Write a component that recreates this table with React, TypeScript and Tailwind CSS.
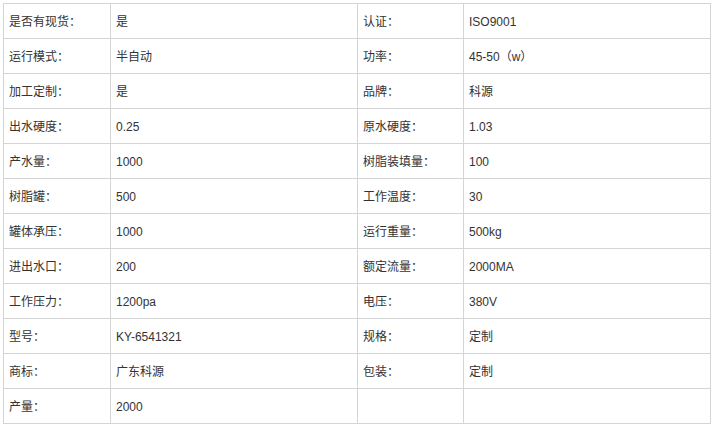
const ROWS: [string, string, string, string][] = [
  ["是否有现货：", "是", "认证：", "ISO9001"],
  ["运行模式：", "半自动", "功率：", "45-50（w）"],
  ["加工定制：", "是", "品牌：", "科源"],
  ["出水硬度：", "0.25", "原水硬度：", "1.03"],
  ["产水量：", "1000", "树脂装填量：", "100"],
  ["树脂罐：", "500", "工作温度：", "30"],
  ["罐体承压：", "1000", "运行重量：", "500kg"],
  ["进出水口：", "200", "额定流量：", "2000MA"],
  ["工作压力：", "1200pa", "电压：", "380V"],
  ["型号：", "KY-6541321", "规格：", "定制"],
  ["商标：", "广东科源", "包装：", "定制"],
  ["产量：", "2000", "", ""],
];

export default function App() {
  return (
    <div className="min-h-screen bg-white p-[3px]">
      <table className="w-[707px] table-fixed border-collapse font-['Liberation_Sans','Noto_Sans_CJK_SC',sans-serif] text-[12px] text-[#333]">
        <colgroup>
          <col className="w-[107px]" />
          <col className="w-[247px]" />
          <col className="w-[106px]" />
          <col className="w-[247px]" />
        </colgroup>
        <tbody>
          {ROWS.map((r, i) => (
            <tr key={i} className="h-[35px]">
              {r.map((c, j) => (
                <td key={j} className="border border-[#d4d4d4] px-[5px] pt-[2px] align-middle leading-none">
                  {c}
                </td>
              ))}
            </tr>
          ))}
        </tbody>
      </table>
    </div>
  );
}
